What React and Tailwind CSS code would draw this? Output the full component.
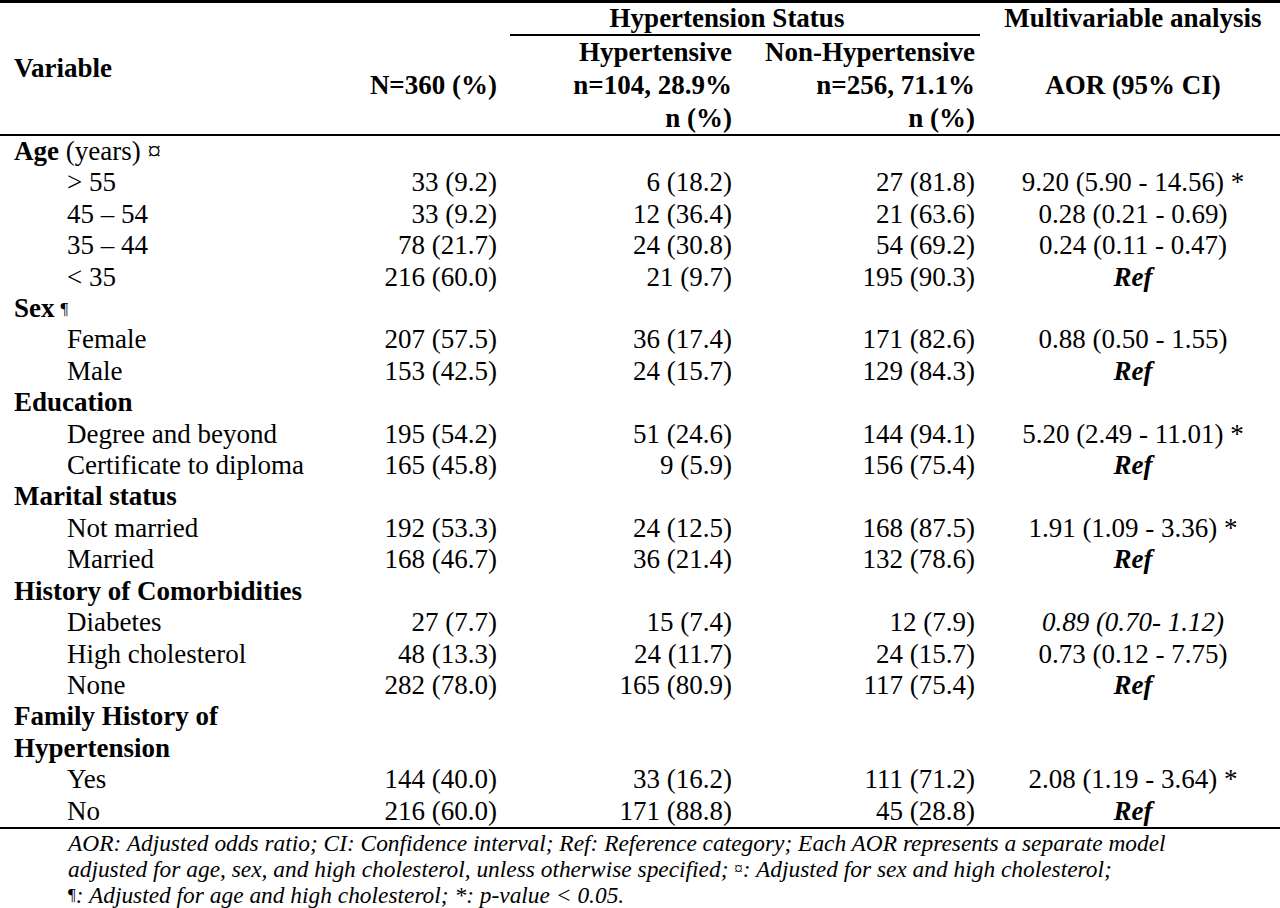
const rows = [
  { label: 'Age', note: ' (years) ¤', head: true },
  { label: '> 55', n: '33 (9.2)', hyp: '6 (18.2)', non: '27 (81.8)', aor: '9.20 (5.90 - 14.56) *' },
  { label: '45 – 54', n: '33 (9.2)', hyp: '12 (36.4)', non: '21 (63.6)', aor: '0.28 (0.21 - 0.69)' },
  { label: '35 – 44', n: '78 (21.7)', hyp: '24 (30.8)', non: '54 (69.2)', aor: '0.24 (0.11 - 0.47)' },
  { label: '< 35', n: '216 (60.0)', hyp: '21 (9.7)', non: '195 (90.3)', ref: true },
  { label: 'Sex', mark: '¶', head: true },
  { label: 'Female', n: '207 (57.5)', hyp: '36 (17.4)', non: '171 (82.6)', aor: '0.88 (0.50 - 1.55)' },
  { label: 'Male', n: '153 (42.5)', hyp: '24 (15.7)', non: '129 (84.3)', ref: true },
  { label: 'Education', head: true },
  { label: 'Degree and beyond', n: '195 (54.2)', hyp: '51 (24.6)', non: '144 (94.1)', aor: '5.20 (2.49 - 11.01) *' },
  { label: 'Certificate to diploma', n: '165 (45.8)', hyp: '9 (5.9)', non: '156 (75.4)', ref: true },
  { label: 'Marital status', head: true },
  { label: 'Not married', n: '192 (53.3)', hyp: '24 (12.5)', non: '168 (87.5)', aor: '1.91 (1.09 - 3.36) *' },
  { label: 'Married', n: '168 (46.7)', hyp: '36 (21.4)', non: '132 (78.6)', ref: true },
  { label: 'History of Comorbidities', head: true },
  { label: 'Diabetes', n: '27 (7.7)', hyp: '15 (7.4)', non: '12 (7.9)', aor: '0.89 (0.70- 1.12)', italic: true },
  { label: 'High cholesterol', n: '48 (13.3)', hyp: '24 (11.7)', non: '24 (15.7)', aor: '0.73 (0.12 - 7.75)' },
  { label: 'None', n: '282 (78.0)', hyp: '165 (80.9)', non: '117 (75.4)', ref: true },
  { label: 'Family History of Hypertension', head: true },
  { label: 'Yes', n: '144 (40.0)', hyp: '33 (16.2)', non: '111 (71.2)', aor: '2.08 (1.19 - 3.64) *' },
  { label: 'No', n: '216 (60.0)', hyp: '171 (88.8)', non: '45 (28.8)', ref: true },
];

const cols = 'grid grid-cols-[320px_183px_236px_247px_294px]';

function Row({ r }) {
  if (r.head) {
    return (
      <div className={cols}>
        <div className="pl-[14px] pr-2">
          <span className="font-bold">{r.label}</span>
          {r.note && <span>{r.note}</span>}
          {r.mark && <span className="ml-[6px] align-top text-[17px]">{r.mark}</span>}
        </div>
      </div>
    );
  }
  return (
    <div className={cols}>
      <div className="pl-[67px]">{r.label}</div>
      <div className="pr-[6px] text-right">{r.n}</div>
      <div className="pr-[7px] text-right">{r.hyp}</div>
      <div className="pr-[11px] text-right">{r.non}</div>
      <div className="text-center">
        {r.ref ? <span className="font-bold italic">Ref</span> : <span className={r.italic ? 'italic' : ''}>{r.aor}</span>}
      </div>
    </div>
  );
}

export default function App() {
  return (
    <div className="min-h-screen w-[1280px] bg-white text-black font-['Liberation_Serif','Times_New_Roman',serif]">
      {/* Header */}
      <div className="border-t-[3px] border-b-[2px] border-black text-[27px] font-bold">
        <div className="grid grid-cols-[320px_183px_236px_247px_294px] grid-rows-[33px_98px]">
          <div className="col-start-1 row-start-1 row-span-2 flex items-center pl-[14px]">Variable</div>
          <div className="col-start-2 row-start-2 flex items-center justify-end pr-[6px]">N=360 (%)</div>
          <div className="col-span-2 col-start-3 row-start-1 ml-[7px] mr-[6px] border-b-2 border-black text-center leading-[31px] pr-[36px]">
            Hypertension Status
          </div>
          <div className="col-start-5 row-start-1 text-center leading-[31px]">Multivariable analysis</div>
          <div className="col-start-3 row-start-2 pr-[7px] text-right leading-[33px]">
            <div>Hypertensive</div>
            <div>n=104, 28.9%</div>
            <div>n (%)</div>
          </div>
          <div className="col-start-4 row-start-2 pr-[11px] text-right leading-[33px]">
            <div>Non-Hypertensive</div>
            <div>n=256, 71.1%</div>
            <div>n (%)</div>
          </div>
          <div className="col-start-5 row-start-2 flex items-center justify-center">AOR (95% CI)</div>
        </div>
      </div>

      {/* Body */}
      <div className="border-b-[2px] border-black text-[27px] leading-[31.4px]">
        {rows.map((r, i) => (
          <Row key={i} r={r} />
        ))}
      </div>

      {/* Notes */}
      <div className="pl-[68px] pt-px text-[23.4px] italic leading-[26px]">
        <div>AOR: Adjusted odds ratio; CI: Confidence interval; Ref: Reference category; Each AOR represents a separate model</div>
        <div>adjusted for age, sex, and high cholesterol, unless otherwise specified; <span className="not-italic text-[17px] align-top">¤</span>: Adjusted for sex and high cholesterol;</div>
        <div><span className="not-italic text-[17px] align-top">¶</span>: Adjusted for age and high cholesterol; *: p-value &lt; 0.05.</div>
      </div>
    </div>
  );
}
